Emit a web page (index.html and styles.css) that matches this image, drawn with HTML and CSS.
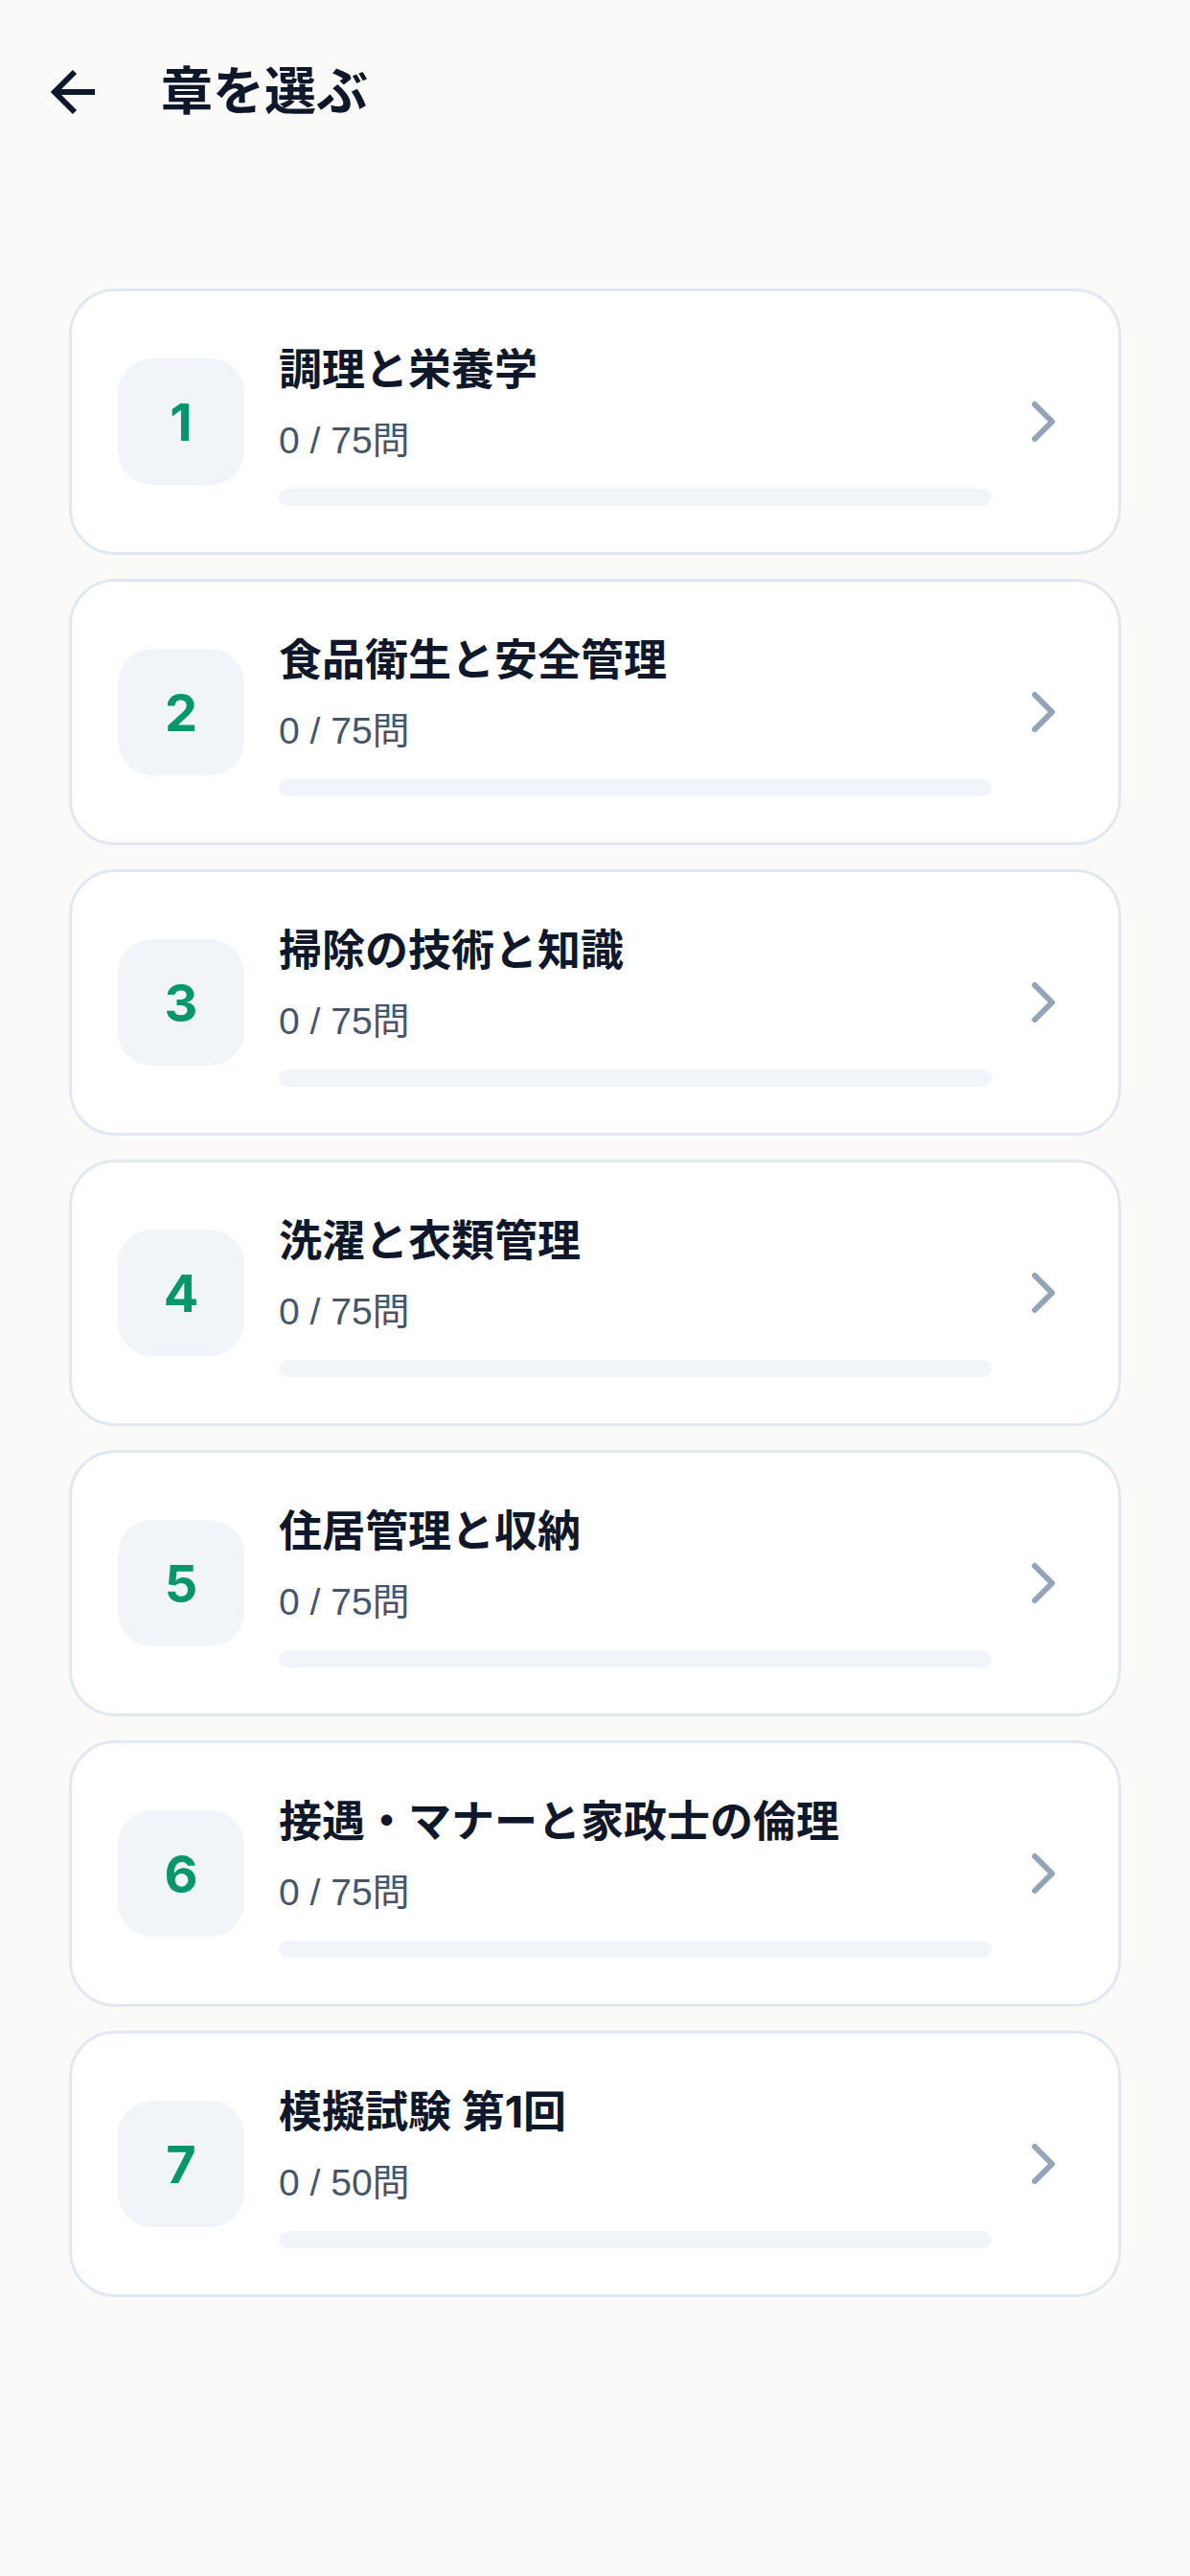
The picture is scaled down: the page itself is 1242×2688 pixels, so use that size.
FILE: index.html
```html
<!DOCTYPE html>
<html lang="ja">
<head>
<meta charset="utf-8">
<title>章を選ぶ</title>
<link rel="stylesheet" href="styles.css">
</head>
<body>
<header class="header">
  <button class="back" aria-label="戻る">
    <svg width="72" height="72" viewBox="0 0 24 24" fill="none" stroke="#0f172a" stroke-width="2" stroke-linecap="butt" stroke-linejoin="miter"><path d="m12 19-7-7 7-7"/><path d="M19 12H5"/></svg>
  </button>
  <h1 class="title">章を選ぶ</h1>
</header>
<main class="list">
  <div class="card">
    <div class="num">1</div>
    <div class="content"><div class="name">調理と栄養学</div><div class="count">0 / 75問</div><div class="bar"></div></div>
    <svg class="chev" width="72" height="72" viewBox="0 0 24 24" fill="none" stroke="#94a3b8" stroke-width="2" stroke-linecap="round" stroke-linejoin="round"><path d="m9 18 6-6-6-6"/></svg>
  </div>
  <div class="card">
    <div class="num">2</div>
    <div class="content"><div class="name">食品衛生と安全管理</div><div class="count">0 / 75問</div><div class="bar"></div></div>
    <svg class="chev" width="72" height="72" viewBox="0 0 24 24" fill="none" stroke="#94a3b8" stroke-width="2" stroke-linecap="round" stroke-linejoin="round"><path d="m9 18 6-6-6-6"/></svg>
  </div>
  <div class="card">
    <div class="num">3</div>
    <div class="content"><div class="name">掃除の技術と知識</div><div class="count">0 / 75問</div><div class="bar"></div></div>
    <svg class="chev" width="72" height="72" viewBox="0 0 24 24" fill="none" stroke="#94a3b8" stroke-width="2" stroke-linecap="round" stroke-linejoin="round"><path d="m9 18 6-6-6-6"/></svg>
  </div>
  <div class="card">
    <div class="num">4</div>
    <div class="content"><div class="name">洗濯と衣類管理</div><div class="count">0 / 75問</div><div class="bar"></div></div>
    <svg class="chev" width="72" height="72" viewBox="0 0 24 24" fill="none" stroke="#94a3b8" stroke-width="2" stroke-linecap="round" stroke-linejoin="round"><path d="m9 18 6-6-6-6"/></svg>
  </div>
  <div class="card">
    <div class="num">5</div>
    <div class="content"><div class="name">住居管理と収納</div><div class="count">0 / 75問</div><div class="bar"></div></div>
    <svg class="chev" width="72" height="72" viewBox="0 0 24 24" fill="none" stroke="#94a3b8" stroke-width="2" stroke-linecap="round" stroke-linejoin="round"><path d="m9 18 6-6-6-6"/></svg>
  </div>
  <div class="card">
    <div class="num">6</div>
    <div class="content"><div class="name">接遇・マナーと家政士の倫理</div><div class="count">0 / 75問</div><div class="bar"></div></div>
    <svg class="chev" width="72" height="72" viewBox="0 0 24 24" fill="none" stroke="#94a3b8" stroke-width="2" stroke-linecap="round" stroke-linejoin="round"><path d="m9 18 6-6-6-6"/></svg>
  </div>
  <div class="card">
    <div class="num">7</div>
    <div class="content"><div class="name">模擬試験 第1回</div><div class="count">0 / 50問</div><div class="bar"></div></div>
    <svg class="chev" width="72" height="72" viewBox="0 0 24 24" fill="none" stroke="#94a3b8" stroke-width="2" stroke-linecap="round" stroke-linejoin="round"><path d="m9 18 6-6-6-6"/></svg>
  </div>
</main>
</body>
</html>
```
FILE: styles.css
```css
* { box-sizing: border-box; }
html, body {
  margin: 0;
  padding: 0;
  background: #fafaf9;
}
body {
  font-family: "Inter", "Noto Sans CJK JP", sans-serif;
  color: #0f172a;
  min-height: 2688px;
}
.header {
  display: flex;
  align-items: center;
  padding: 60px 0 0 42px;
  height: 132px;
}
.back {
  width: 72px;
  height: 72px;
  padding: 0;
  border: 0;
  background: none;
  display: flex;
}
.title {
  margin: 0 0 0 54px;
  font-size: 54px;
  font-weight: 700;
  line-height: 72px;
  color: #0f172a;
}
.list {
  display: flex;
  flex-direction: column;
  gap: 25px;
  padding: 169px 72px 0;
}
.card {
  display: flex;
  align-items: center;
  background: #ffffff;
  border: 3px solid #e2e8f0;
  border-radius: 48px;
  padding: 48px 42px 48px 48px;
}
.num {
  flex: none;
  width: 132px;
  height: 132px;
  border-radius: 36px;
  background: #f1f5f9;
  display: flex;
  align-items: center;
  justify-content: center;
  color: #059669;
  font-size: 54px;
  font-weight: 700;
}
.content {
  flex: 1;
  margin: 0 18px 0 36px;
  display: flex;
  flex-direction: column;
}
.name {
  margin-top: 4px;
  font-size: 45px;
  font-weight: 700;
  line-height: 60px;
  color: #0f172a;
}
.count {
  margin-top: 18px;
  font-family: "Liberation Sans", "Noto Sans CJK JP", sans-serif;
  font-size: 39px;
  line-height: 52px;
  color: #475569;
}
.bar {
  margin-top: 24px;
  height: 18px;
  border-radius: 9px;
  background: #f1f5f9;
}
.chev { flex: none; }
```
